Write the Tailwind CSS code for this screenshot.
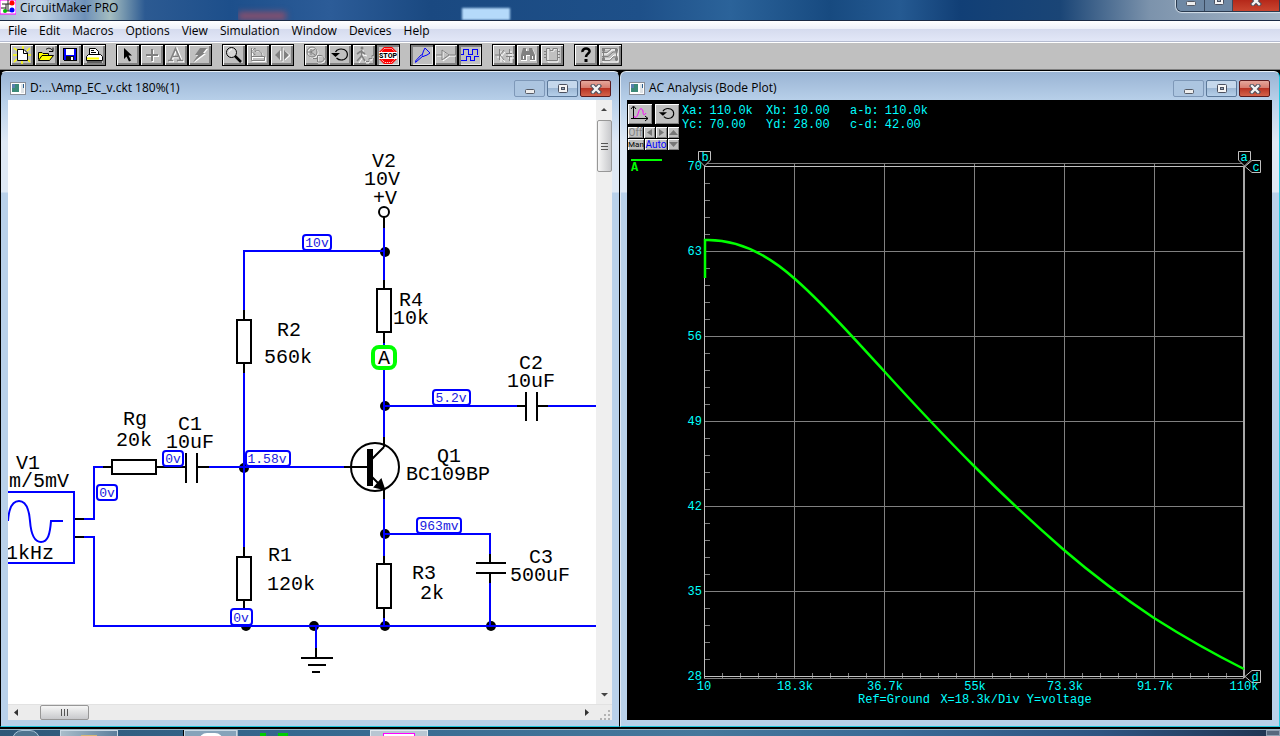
<!DOCTYPE html>
<html lang="en">
<head>
    <meta charset="UTF-8">
    <meta name="viewport" content="width=device-width, initial-scale=1.0">
    <title>CircuitMaker PRO</title>
    <script src="https://cdn.jsdelivr.net/npm/@tailwindcss/browser@4"></script>
</head>
<body class="flex h-screen flex-col overflow-hidden bg-black font-['Open_Sans','Noto_Sans',sans-serif] text-xs text-black">

    <!-- shared icons -->
    <svg class="hidden">
        <symbol id="doc" viewBox="0 0 16 13">
            <rect x=".5" y=".5" width="15" height="12" fill="#fff" stroke="#8a8f98"/>
            <rect x="2" y="2" width="7" height="8" fill="#3c8a78"/>
            <rect x="2" y="2" width="3" height="4" fill="#5a7fae"/>
            <rect x="11" y="2" width="3" height="9" fill="#dfe3e6"/>
            <rect x="13" y="2" width="1" height="4" fill="#2d5f8f"/>
        </symbol>
        <symbol id="win-min" viewBox="0 0 12 10"><rect x="1.5" y="5.5" width="9" height="4" rx="1" fill="#eee" stroke="#555b66"/></symbol>
        <symbol id="win-max" viewBox="0 0 12 10">
            <rect x="1.5" y=".5" width="9" height="8" rx="1" fill="#f5f5f5" stroke="#4b5160"/>
            <rect x="4.5" y="3.5" width="3" height="2" fill="#9ab" stroke="#4b5160"/>
        </symbol>
        <symbol id="win-close" viewBox="0 0 12 10">
            <path d="M3 2L9 8M9 2L3 8" stroke="#4a4f5c" stroke-width="4.4" stroke-linecap="square"/>
            <path d="M3 2L9 8M9 2L3 8" stroke="#f4f4f4" stroke-width="2.4" stroke-linecap="square"/>
        </symbol>
        <symbol id="reset" viewBox="0 0 24 22">
            <path d="M7.500 8C9 5 13 4.500 16 5.500C20.500 7.500 20.500 13.500 16 15.500C13 16.500 10 15.500 8.500 14" fill="none" stroke="#000" stroke-width="1.2"/>
            <path d="M3 9H12L7.500 13Z"/>
        </symbol>
    </svg>

    <!-- application title bar -->
    <header class="flex h-[21px] shrink-0 items-start justify-between border-b border-[#1a2a44] bg-[linear-gradient(90deg,#a9bdd3_0,#c3d5e6_40px,#6d90b8_85px,#a4bdc0_110px,#2c5a92_145px,#1d4f8b_230px,#2c5c98_330px,#1a4981_430px,#1e5089_640px,#2b639a_730px,#174a80_830px,#255a92_900px,#113f76_960px,#1a4576_1060px,#7c93ac_1150px,#a3b4c6_100%)]">
        <div class="flex h-4 items-center gap-1">
            <svg class="size-4" viewBox="0 0 16 16">
                <path d="M0 0H16V14H0Z" fill="#fff" stroke="#f0f"/>
                <path d="M2 4H6V11H10M6 4H11M8 0V11M1 8H6" fill="none" stroke="#222"/>
                <circle cx="12" cy="3" r="2.5" fill="#f00"/>
                <circle cx="12" cy="10" r="2.5" fill="#00f"/>
                <circle cx="5" cy="11" r="2" fill="#0b0"/>
            </svg>
            <h1 class="leading-4">CircuitMaker PRO</h1>
        </div>
        <div class="h-[21px] grow pl-[120px]">
            <div class="flex h-5 items-end gap-[176px] overflow-hidden">
                <div class="h-2 w-12 bg-[#8c4f6b] blur-[3px]"></div>
                <div class="h-3 w-12 bg-[#b5dafa] blur-[1px]"></div>
            </div>
        </div>
        <div class="flex h-3 overflow-hidden rounded-bl-md border border-t-0 border-[#2b3b50] shadow-[0_0_1px_1px_#d5e0ea]">
            <button type="button" aria-label="Minimize" class="flex w-7 items-start justify-center border-r border-[#3b4b60] bg-[#6e88a4]"><svg class="-mt-1 h-[10px] w-3"><use href="#win-min"/></svg></button>
            <button type="button" aria-label="Maximize" class="flex w-7 items-start justify-center border-r border-[#3b4b60] bg-[#6e88a4]"><svg class="-mt-1 h-[10px] w-3"><use href="#win-max"/></svg></button>
            <button type="button" aria-label="Close" class="flex w-[46px] items-start justify-center bg-linear-to-b from-[#b5281a] to-[#c9452f]"><svg class="-mt-1 h-[10px] w-3"><use href="#win-close"/></svg></button>
        </div>
    </header>

    <!-- menu -->
    <nav class="flex h-[21px] shrink-0 items-center gap-3 border-b border-[#b4bbd0] bg-[linear-gradient(#fff,#eef1f9_38%,#d5dbee_40%,#e2e7f7)] px-2">
        <a href="#">File</a>
        <a href="#">Edit</a>
        <a href="#">Macros</a>
        <a href="#">Options</a>
        <a href="#">View</a>
        <a href="#">Simulation</a>
        <a href="#">Window</a>
        <a href="#">Devices</a>
        <a href="#">Help</a>
    </nav>

    <!-- toolbar -->
    <div role="toolbar" class="flex h-7 shrink-0 items-start gap-[10px] border-t border-b border-t-white border-b-[#808080] bg-[#c0c0c0] px-[10px] pt-px [&_button]:h-[22px] [&_button]:w-6 [&_button]:border [&_button]:border-black [&_button]:bg-[#c0c0c0] [&_button]:shadow-[inset_1px_1px_#fff,inset_-2px_-2px_#808080] [&_button.on]:shadow-[inset_2px_2px_#808080,inset_-1px_-1px_#e8e8e8] [&_svg]:block [&_svg]:h-5 [&_svg]:w-[22px]">
        <div class="flex">
            <button type="button" aria-label="New"><svg viewBox="1 1 22 20">
                <path d="M4 4L8 7M13 2V5M20 4L17 7M3 11H7M18 11H21M4 18L7 15M20 18L17 15M12 17V20" stroke="#ff0" stroke-width="1.5"/>
                <path d="M7.5 5.5H14L17.5 9V16.5H7.5Z" fill="#fff" stroke="#000"/><path d="M13.5 5.5V9.5H17.5" fill="none" stroke="#000"/>
            </svg></button>
            <button type="button" aria-label="Open"><svg viewBox="1 1 22 20">
                <path d="M4.5 15.5V8.5H8L9 9.5H14.5V11" fill="#ff0" stroke="#000"/><path d="M4.5 16.5L8 11.5H19.5L15.5 16.5Z" fill="#ff0" stroke="#000"/>
                <path d="M12 5.5C14 3.5 17 4 18.5 6.5M19 3.5V7.5H15" fill="none" stroke="#000"/>
            </svg></button>
            <button type="button" aria-label="Save"><svg viewBox="1 1 22 20" shape-rendering="crispEdges">
                <path d="M5.5 4.5H18.5V16.5H6.5L5.5 15.5Z" fill="#00f" stroke="#000"/><rect x="8" y="5" width="8" height="6" fill="#fff"/><rect x="8" y="12" width="8" height="4" fill="#111"/><rect x="13" y="13" width="2" height="3" fill="#fff"/>
            </svg></button>
            <button type="button" aria-label="Print"><svg viewBox="1 1 22 20">
                <path d="M7.5 11.5V4.5H13.5L16.5 7.5V11.5" fill="#fff" stroke="#000"/><path d="M9 6.5H12M9 8.5H14M9 10.5H15" stroke="#000"/>
                <path d="M4.5 12.5L6.5 10.5H18.5L20.5 12.5V16.5H4.5Z" fill="#fff" stroke="#000"/><path d="M5 14.5H17" stroke="#ff0" stroke-width="2"/><path d="M5 18H20" stroke="#000"/>
            </svg></button>
        </div>
        <div class="flex">
            <button type="button" aria-label="Arrow"><svg viewBox="1 1 22 20"><path d="M8 4V15L10.5 12.5L13 17.5L15 16.5L12.5 11.5H16Z"/></svg></button>
            <button type="button" aria-label="Wire"><svg viewBox="1 1 22 20"><path d="M13 6V18M7 12H19" stroke="#fff" stroke-width="2"/><path d="M12 5V17M6 11H18" stroke="#808080" stroke-width="2"/></svg></button>
            <button type="button" aria-label="Text"><svg viewBox="1 1 22 20">
                <path d="M5 17.5H10M14 17.5H20M8 17L13 4.5L18 17M10 13.5H16" fill="none" stroke="#fff" stroke-width="1.5"/><path d="M4 16.5H9M13 16.5H19M6.5 16L11.5 4.5L16.5 16M9 12.5H14" fill="none" stroke="#808080" stroke-width="1.6"/>
            </svg></button>
            <button type="button" aria-label="Zap"><svg viewBox="1 1 22 20"><path d="M14 5H20L16 10H18L6 19L11 12H8Z" fill="#fff"/><path d="M12 4H19L15 9H17L5 18L10 11H7Z" fill="#808080"/></svg></button>
        </div>
        <div class="flex">
            <button type="button" aria-label="Zoom"><svg viewBox="1 1 22 20"><circle cx="9.5" cy="8.5" r="5" fill="#d5d5d5" stroke="#000"/><path d="M7 8A3 3 0 0 1 10 5.5" fill="none" stroke="#fff"/><path d="M13 12L19 18" stroke="#000" stroke-width="2.5"/></svg></button>
            <button type="button" aria-label="Rotate"><svg viewBox="1 1 22 20"><path d="M6.5 5V17.5H19.5V13.5H6.5M10 9H8M9 8.5C13 5 17 8 17 13M9 5V11L6 8Z" fill="none" stroke="#fff"/><path d="M5.5 4V16.5H18.5V12.5H5.5M9 7.5C13 5 16 8 16 12M9 4V11L6 7.5Z" fill="none" stroke="#808080"/></svg></button>
            <button type="button" aria-label="Mirror"><svg viewBox="1 1 22 20"><path d="M13 4V18M11 7V16L6 11.5ZM15 7V16L20 11.5Z" fill="#fff" stroke="#fff"/><path d="M12 3V17" stroke="#808080"/><path d="M10 6V16L5 11ZM14 6V16L19 11Z" fill="#808080"/></svg></button>
        </div>
        <div class="flex">
            <button type="button" aria-label="Digital or analog"><svg viewBox="1 1 22 20" fill="none">
                <g stroke="#fff"><circle cx="9" cy="9" r="5"/><path d="M14 12H18C22 13 22 18 18 19H14Z"/></g>
                <g stroke="#808080"><circle cx="8" cy="8" r="5"/><path d="M3 8H7M7 5V11M7 8L11 5M7 8L11 11M13.5 11.5H17C21 12 21 17 17 18H13.5ZM9 14.5H13M20 15H22"/></g>
            </svg></button>
            <button type="button" aria-label="Reset"><svg viewBox="1 1 22 20"><use href="#reset" width="24" height="22"/></svg></button>
            <button type="button" aria-label="Step"><svg viewBox="1 1 22 20" fill="none">
                <path d="M11 6V13L7 19M11 13L14 18M8 10L15 12M14 19H17V16H20V13H22" stroke="#fff"/>
                <circle cx="10" cy="4" r="1.5" fill="#808080"/><path d="M9.5 6V12L5 17M10 12L13 17M5 10L9 7L13 10" stroke="#808080" stroke-width="1.6"/><path d="M14 17.5H17V14.5H20V11.5H22" stroke="#808080"/>
            </svg></button>
            <button type="button" class="on" aria-label="Stop"><svg viewBox="1 1 22 20">
                <path d="M8 3H16L21 8V15L16 20H8L3 15V8Z" fill="#f00"/><path d="M8.5 4.5H15.5L19.5 8.500V14.5L15.5 18.5H8.5L4.5 14.5V8.5Z" fill="none" stroke="#fff" stroke-dasharray="1 1"/>
                <rect x="3" y="8" width="18" height="7" fill="#fff"/><text x="12" y="14" text-anchor="middle" font-size="7" font-weight="800" font-family="Roboto, sans-serif">STOP</text>
            </svg></button>
        </div>
        <div class="flex">
            <button type="button" class="on" aria-label="Probe"><svg viewBox="1 1 22 20" fill="none" stroke="#00f"><path d="M15 4L20 9L17 11L13 12.5L12 11.5L13.5 7ZM13 12L6 18L5.5 17L11.5 10.5M5 18.5L7 17"/></svg></button>
            <button type="button" aria-label="Buffer"><svg viewBox="1 1 22 20" fill="none"><path d="M3 12H9V7L16 12L9 17V12M16 12H22" stroke="#fff"/><path d="M2 11H8V6L15 11L8 16V11M15 11H21" stroke="#808080"/></svg></button>
            <button type="button" class="on" aria-label="Waveforms"><svg viewBox="1 1 22 20" fill="none" stroke="#00f" shape-rendering="crispEdges"><path d="M3 10.5H5.5V5.5H10.5V10.5H14.5V5.5H19.5V10.5M3 16.5H8.5V12.5H12.5V16.5H16.5V12.5H21"/></svg></button>
        </div>
        <div class="flex">
            <button type="button" aria-label="Parts"><svg viewBox="1 1 22 20" fill="none"><path d="M5 13H9M9 7V18M9 13L13 8M9 13L13 18M16 11H22M16 14H22M19 7V11M19 14V19" stroke="#fff"/><path d="M3 11H7M7.5 5V16M8 11L12 6M8 11L12 16M14 9.5H20M14 12.5H20M17.5 5V9M17.5 13V17" stroke="#808080"/></svg></button>
            <button type="button" aria-label="Search"><svg viewBox="1 1 22 20"><path d="M8 5H11V8H14V5H17L20 12V17H14V12H11V17H5V12Z" fill="#fff"/><path d="M7 4H10V7H13V4H16L19 11V16H14V11H10V16H5V11Z" fill="#808080"/><path d="M7.5 12V15M16.5 12V15" stroke="#fff"/></svg></button>
            <button type="button" aria-label="Chip"><svg viewBox="1 1 22 20" fill="none"><path d="M8 5H11V7H14V5H18V18H8Z" stroke="#fff"/><path d="M6.5 4.5H10V6.5H13V4.5H17.5V16.5H6.5ZM4 7.5H7M4 10.5H7M4 13.5H7M17 7.5H20M17 10.5H20M17 13.5H20" stroke="#808080"/></svg></button>
        </div>
        <div class="flex">
            <button type="button" aria-label="Help"><svg viewBox="1 1 22 20" fill="none"><path d="M8.5 8C8 3.5 16 3.5 15.5 7.5C15 10 12 10 12 13" stroke="#000" stroke-width="2.6"/><rect x="10.5" y="15" width="3" height="3" fill="#000"/></svg></button>
            <button type="button" aria-label="Board"><svg viewBox="1 1 22 20" fill="none"><path d="M5 5H20V18H5ZM5 10H9L14 6H20M5 15H12L16 11H20" stroke="#fff"/><path d="M4 4.5H19M4 8.5H9L13 5M4 12.5H10L15 8H20M4 16.5H12L15 13H20M5.5 4V17M18.5 5V17" stroke="#808080"/><path d="M4 6H7M17 6H20M4 15H7M17 15H20" stroke="#808080" stroke-width="3"/></svg></button>
        </div>
    </div>

    <!-- child windows -->
    <main class="grid min-h-0 grow grid-cols-[31fr_33fr] pt-px pb-[2px]">

        <!-- schematic -->
        <section class="flex min-w-0 flex-col rounded-t-md border border-t-[#e8f0f8] border-r-black border-b-[#22c8e0] border-l-black bg-[linear-gradient(#9ab4d4,#b9d1ea_30px,#dfe9f5_70px,#dfe9f5_120px,#b9d1ea_121px)] px-[7px] pb-[6px]">
            <div class="flex h-7 shrink-0 items-center justify-between">
                <div class="flex items-center gap-1 pt-1 pl-[2px]">
                    <svg class="h-[13px] w-4"><use href="#doc"/></svg>
                    <h2>D:...\Amp_EC_v.ckt 180%(1)</h2>
                </div>
                <div class="flex gap-[2px] pt-[5px] pr-px">
                    <button type="button" aria-label="Minimize" class="flex h-[17px] w-[31px] items-center justify-center rounded-xs border border-[#7e98b8] bg-[#acc5e0]"><svg class="h-[10px] w-3"><use href="#win-min"/></svg></button>
                    <button type="button" aria-label="Maximize" class="flex h-[17px] w-[31px] items-center justify-center rounded-xs border border-[#5b7899] bg-[linear-gradient(#c5d8ec_50%,#9db8d5_50%,#b5cfe9)]"><svg class="h-[10px] w-3"><use href="#win-max"/></svg></button>
                    <button type="button" aria-label="Close" class="flex h-[17px] w-[31px] items-center justify-center rounded-xs border border-[#5a1a1e] bg-[linear-gradient(#e5a79c,#d6786a_50%,#b93424_50%,#d4634a)]"><svg class="h-[10px] w-3"><use href="#win-close"/></svg></button>
                </div>
            </div>
            <div class="flex min-h-0 grow bg-white">
                <svg class="h-full min-w-0 grow" viewBox="8 100 588 604" preserveAspectRatio="xMinYMin meet" font-family="'Liberation Mono', monospace" font-size="20">
                    <!-- junctions -->
                    <g>
                        <circle cx="385" cy="252" r="5"/><circle cx="385" cy="406" r="5"/><circle cx="244" cy="468" r="5"/><circle cx="385" cy="534" r="5"/>
                        <circle cx="246" cy="626" r="5"/><circle cx="314" cy="626" r="5"/><circle cx="385" cy="626" r="5"/><circle cx="491" cy="626" r="5"/>
                    </g>
                    <!-- wires -->
                    <path fill="none" stroke="#00f" stroke-width="2" shape-rendering="crispEdges" d="M385 251H244V310M384 228V280M384 343V347M384 369V437M384 406H517M548 406H596M244 373V547M209 467H344M84 519H94V467H103M84 537H94V626H596M384 499V556M384 534H490V554M490 583V626M384 618V626M316 626V648M0 492H74V563H0M166 467H177"/>
                    <path fill="none" stroke="#00f" stroke-width="2" d="M8 521C9 507 13 501 19 501C26 501 29 509 30 521C31 534 34 542 41 542C48 542 50 534 51 521H63"/>
                    <!-- leads and parts -->
                    <g fill="none" stroke="#000" stroke-width="2" shape-rendering="crispEdges">
                        <path d="M384 217V228M384 280V289M384 332V343M244 310V319M244 363V373M244 547V556M244 601V610M384 556V564M384 608V618M103 467H112M156 467H186M197 467H209M75 519H84M75 537H84M384 437V447M344 467H368M384 489V499M517 406H526M537 406H548M490 554V563M490 573V583M316 648V658"/>
                        <path d="M186 453V483M197 453V483M526 392V421M537 392V421M476 563H506M476 573H506M301 658H333M308 665H326M312 672H320"/>
                        <path fill="#fff" d="M377 289H391V332H377ZM237 320H251V363H237ZM237 557H251V600H237ZM377 564H391V608H377ZM112 460H156V474H112Z"/>
                    </g>
                    <g fill="none" stroke="#000" stroke-width="2">
                        <circle cx="384" cy="212" r="5"/>
                        <circle cx="375" cy="467" r="24"/>
                        <path d="M371 460L384 447M371 476L384 489"/>
                        <path d="M370 449V486" stroke-width="6"/>
                        <path d="M384 489L375 487L381 480Z" fill="#000"/>
                    </g>
                    <rect x="373" y="347" width="22" height="21" rx="6" fill="#fff" stroke="#0f0" stroke-width="4"/>
                    <!-- part labels -->
                    <text x="372" y="167">V2</text>
                    <text x="364" y="185">10V</text>
                    <text x="373" y="204">+V</text>
                    <text x="399" y="306">R4</text>
                    <text x="393" y="324">10k</text>
                    <text x="378" y="364">A</text>
                    <text x="277" y="336">R2</text>
                    <text x="264" y="363">560k</text>
                    <text x="519" y="369">C2</text>
                    <text x="507" y="387">10uF</text>
                    <text x="123" y="425">Rg</text>
                    <text x="116" y="446">20k</text>
                    <text x="178" y="430">C1</text>
                    <text x="166" y="448">10uF</text>
                    <text x="16" y="469">V1</text>
                    <text x="9" y="487">m/5mV</text>
                    <text x="6" y="559">1kHz</text>
                    <text x="437" y="462">Q1</text>
                    <text x="406" y="480">BC109BP</text>
                    <text x="268" y="561">R1</text>
                    <text x="267" y="590">120k</text>
                    <text x="412" y="579">R3</text>
                    <text x="420" y="599">2k</text>
                    <text x="529" y="563">C3</text>
                    <text x="510" y="581">500uF</text>
                    <!-- node voltages -->
                    <g fill="#fff" stroke="#00f" stroke-width="2">
                        <rect x="303" y="235" width="28" height="15" rx="3"/>
                        <rect x="433" y="390" width="37" height="15" rx="3"/>
                        <rect x="246" y="451" width="44" height="15" rx="3"/>
                        <rect x="163" y="451" width="20" height="15" rx="3"/>
                        <rect x="97" y="485" width="20" height="15" rx="3"/>
                        <rect x="417" y="518" width="44" height="15" rx="3"/>
                        <rect x="231" y="609" width="21" height="16" rx="3"/>
                    </g>
                    <g fill="#2020e0" font-size="13" text-anchor="middle">
                        <text x="317" y="247">10v</text>
                        <text x="451" y="402">5.2v</text>
                        <text x="267" y="463">1.58v</text>
                        <text x="173" y="463">0v</text>
                        <text x="107" y="497">0v</text>
                        <text x="439" y="530">963mv</text>
                        <text x="241" y="622">0v</text>
                    </g>
                </svg>
                <div class="flex w-4 shrink-0 flex-col items-center bg-[#efefef]">
                    <svg class="h-5 w-4 shrink-0" viewBox="0 0 16 20"><path d="M5 11L8 8L11 11Z" fill="#444"/></svg>
                    <div class="flex h-[52px] w-[15px] shrink-0 flex-col items-center justify-center gap-[2px] rounded-xs border border-[#979797] bg-linear-to-r from-[#f6f6f6] to-[#c8c9cc]">
                        <i class="h-px w-[7px] bg-[#555]"></i><i class="h-px w-[7px] bg-[#555]"></i><i class="h-px w-[7px] bg-[#555]"></i>
                    </div>
                    <svg class="mt-auto h-5 w-4 shrink-0" viewBox="0 0 16 20"><path d="M5 9H12L8.5 12.5Z" fill="#444"/></svg>
                </div>
            </div>
            <div class="flex h-4 shrink-0 items-center justify-between border-t border-[#e2e2e2] bg-[#ececec]">
                <div class="flex items-center gap-4">
                    <svg class="h-[15px] w-4" viewBox="0 0 16 15"><path d="M10 4V11L6 7.5Z" fill="#333"/></svg>
                    <div class="flex h-[15px] w-[49px] items-center justify-center gap-[2px] rounded-xs border border-[#979797] bg-linear-to-b from-[#f6f6f6] to-[#c8c9cc]">
                        <i class="h-[7px] w-px bg-[#555]"></i><i class="h-[7px] w-px bg-[#555]"></i><i class="h-[7px] w-px bg-[#555]"></i>
                    </div>
                </div>
                <div class="flex items-center">
                    <svg class="h-[15px] w-4" viewBox="0 0 16 15"><path d="M5 4V11L9 7.5Z" fill="#333"/></svg>
                    <svg class="h-[15px] w-4" viewBox="0 0 16 15" fill="#b4b4b4"><path d="M12 5h2v2h-2zM8 9h2v2h-2zM12 9h2v2h-2zM4 13h2v2h-2zM8 13h2v2h-2zM12 13h2v2h-2z"/></svg>
                </div>
            </div>
        </section>

        <!-- bode plot -->
        <section class="flex min-w-0 flex-col rounded-t-md border border-t-[#e8f0f8] border-r-[#22c8e0] border-b-[#22c8e0] border-l-[#dfe9f5] bg-[linear-gradient(#9ab4d4,#b9d1ea_30px,#dfe9f5_70px,#dfe9f5_120px,#b9d1ea_121px)] pr-[7px] pb-[6px] pl-[6px]">
            <div class="flex h-7 shrink-0 items-center justify-between">
                <div class="flex items-center gap-1 pt-1 pl-[2px]">
                    <svg class="h-[13px] w-4"><use href="#doc"/></svg>
                    <h2>AC Analysis (Bode Plot)</h2>
                </div>
                <div class="flex gap-[2px] pt-[5px] pr-[2px]">
                    <button type="button" aria-label="Minimize" class="flex h-[17px] w-[31px] items-center justify-center rounded-xs border border-[#7e98b8] bg-[#acc5e0]"><svg class="h-[10px] w-3"><use href="#win-min"/></svg></button>
                    <button type="button" aria-label="Maximize" class="flex h-[17px] w-[31px] items-center justify-center rounded-xs border border-[#5b7899] bg-[linear-gradient(#c5d8ec_50%,#9db8d5_50%,#b5cfe9)]"><svg class="h-[10px] w-3"><use href="#win-max"/></svg></button>
                    <button type="button" aria-label="Close" class="flex h-[17px] w-[31px] items-center justify-center rounded-xs border border-[#5a1a1e] bg-[linear-gradient(#e5a79c,#d6786a_50%,#b93424_50%,#d4634a)]"><svg class="h-[10px] w-3"><use href="#win-close"/></svg></button>
                </div>
            </div>
            <div class="flex min-h-0 grow flex-col bg-black">
                <div class="flex h-[50px] shrink-0 gap-[3px] pt-1 pl-px">
                    <div class="flex w-[51px] flex-col gap-px font-['Roboto',sans-serif] text-[10px] leading-[11px] [&_button]:bg-[#c0c0c0] [&_button]:shadow-[inset_1px_1px_#fff,inset_-1px_-1px_#808080]">
                        <div class="mb-[2px] flex justify-between">
                            <button type="button" aria-label="Scale" class="h-5 w-6"><svg class="h-5 w-6" viewBox="0 0 24 20" fill="none"><path d="M5.5 15V3M3 5L5.5 2L8 5M3 14.5H20M17 12L20 14.5L17 17" stroke="#000"/><path d="M6 12C7 15 9 13 10 10C11 6 13 2 15 7C15 11 16 12 18 9" stroke="#f0f"/></svg></button>
                            <button type="button" aria-label="Reset" class="h-5 w-6"><svg class="h-5 w-6"><use href="#reset"/></svg></button>
                        </div>
                        <div class="flex justify-between">
                            <button type="button" class="h-[11px] w-[15px] text-[#808080]">Off</button>
                            <button type="button" aria-label="Left" class="h-[11px] w-[11px]"><svg class="size-[11px]" viewBox="0 0 11 11"><path d="M8 2V9L3 5.5Z" fill="#777"/></svg></button>
                            <button type="button" aria-label="Right" class="h-[11px] w-[11px]"><svg class="size-[11px]" viewBox="0 0 11 11"><path d="M3 2V9L8 5.5Z" fill="#777"/></svg></button>
                            <button type="button" aria-label="Up" class="h-[11px] w-[11px]"><svg class="size-[11px]" viewBox="0 0 11 11"><path d="M1 8H10L5.5 3Z" fill="#777"/></svg></button>
                        </div>
                        <div class="flex justify-between">
                            <button type="button" class="flex h-[11px] w-4 justify-center text-[8px]">Man</button>
                            <button type="button" class="flex h-[11px] w-[22px] justify-center text-[#00f]">Auto</button>
                            <button type="button" aria-label="Down" class="h-[11px] w-[11px]"><svg class="size-[11px]" viewBox="0 0 11 11"><path d="M1 3H10L5.5 8Z" fill="#777"/></svg></button>
                        </div>
                    </div>
                    <dl class="grid auto-rows-[14px] grid-cols-[84px_84px_84px] content-start text-[#0ff] font-['Liberation_Mono',monospace] text-xs leading-[14px] [&>div]:flex [&>div]:gap-[6px]">
                        <div><dt>Xa:</dt><dd>110.0k</dd></div>
                        <div><dt>Xb:</dt><dd>10.00</dd></div>
                        <div><dt>a-b:</dt><dd>110.0k</dd></div>
                        <div><dt>Yc:</dt><dd>70.00</dd></div>
                        <div><dt>Yd:</dt><dd>28.00</dd></div>
                        <div><dt>c-d:</dt><dd>42.00</dd></div>
                    </dl>
                </div>
                <svg class="min-h-0 w-full grow" viewBox="627 150 645 570" preserveAspectRatio="xMinYMin meet" font-family="'Liberation Mono', monospace" font-size="12">
                    <path d="M631 160H662" stroke="#0f0" stroke-width="2"/>
                    <text x="631" y="171" font-weight="700" fill="#0f0">A</text>
                    <g fill="none" shape-rendering="crispEdges">
                        <path stroke="#808080" d="M704 163.5H1244M704 678.5H1244M704 251.5H1244M704 336.5H1244M704 421.5H1244M704 506.5H1244M704 591.5H1244M794.5 163V678M884.5 163V678M974.5 163V678M1064.5 163V678M1154.5 163V678"/>
                        <!-- minor ticks -->
                        <path stroke="#808080" stroke-width="5" stroke-dasharray="1 17" d="M722 675.5H1244"/>
                        <path stroke="#808080" stroke-width="5" stroke-dasharray="1 16" d="M707.5 183V676"/>
                        <path stroke="#c0c0c0" d="M704 166.5H1244M704 676.5H1244M704.5 166V678"/>
                        <path stroke="#a8a8a8" stroke-width="2" d="M1244 166V678"/>
                    </g>
                    <path fill="none" stroke="#0f0" stroke-width="2.5" d="M705 278V240C735 239 765 252 795 279C826 306 855 340 884 371C914 404 944 436 974 466C1003 495 1033 523 1064 550C1093 575 1124 598 1154 618C1184 637 1214 654 1244 669"/>
                    <!-- cursors -->
                    <g fill="#000" stroke="#c0c0c0">
                        <path d="M698.5 151.5H710.5V160L704.5 166L698.5 160Z"/>
                        <path d="M1238.5 151.5H1250.5V160L1244.5 166L1238.5 160Z"/>
                        <path d="M1260.5 160.5V172.5H1252L1245 166.5L1252 160.5Z"/>
                        <path d="M1260.5 670.5V682.5H1252L1245 676.5L1252 670.5Z"/>
                    </g>
                    <g fill="#0ff" text-anchor="middle">
                        <text x="705" y="161">b</text>
                        <text x="1244" y="161">a</text>
                        <text x="1256" y="171">c</text>
                        <text x="1255" y="681">d</text>
                        <text x="704" y="690">10</text>
                        <text x="795" y="690">18.3k</text>
                        <text x="885" y="690">36.7k</text>
                        <text x="975" y="690">55k</text>
                        <text x="1065" y="690">73.3k</text>
                        <text x="1155" y="690">91.7k</text>
                        <text x="1244" y="690">110k</text>
                        <text x="894" y="703">Ref=Ground</text>
                        <text x="1016" y="703">X=18.3k/Div Y=voltage</text>
                    </g>
                    <g fill="#0ff" text-anchor="end">
                        <text x="702" y="170">70</text>
                        <text x="702" y="255">63</text>
                        <text x="702" y="340">56</text>
                        <text x="702" y="425">49</text>
                        <text x="702" y="510">42</text>
                        <text x="702" y="595">35</text>
                        <text x="702" y="680">28</text>
                    </g>
                </svg>
            </div>
        </section>
    </main>

    <!-- taskbar -->
    <footer class="flex h-[7px] shrink-0 overflow-hidden border-t border-[#9fb6c8] bg-[linear-gradient(90deg,#2f5878,#35688f_300px,#47789c_700px,#3a6a96_900px,#2f5582_1100px,#1f3350)]">
        <div class="w-[60px] px-3"><div class="h-5 w-7 rounded-full border border-[#a9c4d8] bg-[#4f7590]"></div></div>
        <div class="flex w-[58px] justify-center border border-b-0 border-[#c8d8e4] bg-linear-to-r from-[#a9bdca] to-[#5c7f9c] pt-1"><div class="h-1 w-4 bg-[#d6b674]"></div></div>
        <div class="w-[66px] border-r border-black"></div>
        <div class="flex w-[53px] justify-center border border-b-0 border-[#c8d8e4] bg-[#86a3ba] pt-[2px]"><div class="h-4 w-6 rounded-full bg-white"></div></div>
        <div class="flex w-[133px] gap-3 border-l border-[#a0b5c5] pt-[3px] pl-[22px]"><div class="h-1 w-[6px] bg-[#0c0]"></div><div class="h-1 w-[10px] bg-[#0c0]"></div></div>
        <div class="flex w-[58px] justify-center border border-b-0 border-[#e0e8ee] bg-[#b8c6d2] pt-[2px]"><div class="h-3 w-8 border border-[#f0f] bg-white"></div></div>
        <div class="ml-auto w-[14px] border border-[#8f9fb2] bg-[#56687e]"></div>
    </footer>
</body>
</html>
